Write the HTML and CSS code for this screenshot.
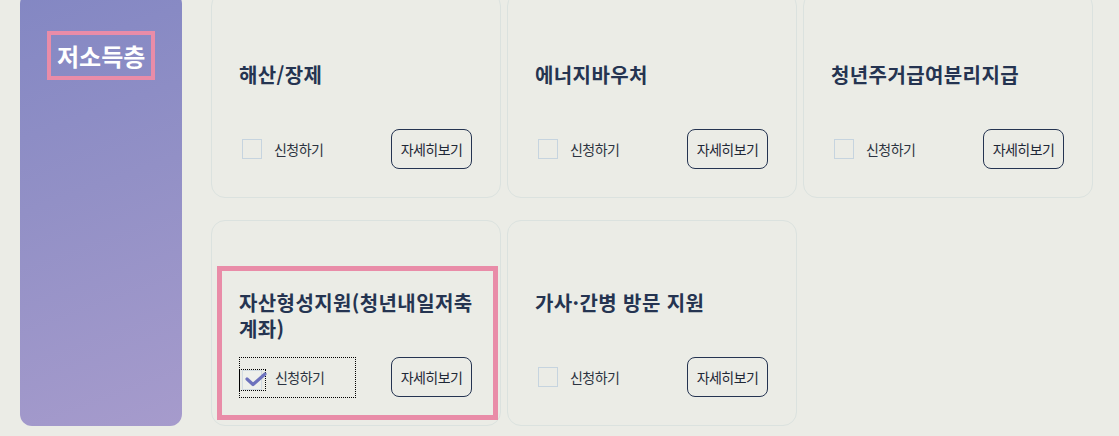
FILE: index.html
```html
<!DOCTYPE html>
<html lang="ko">
<head>
<meta charset="utf-8">
<title>저소득층</title>
<link rel="stylesheet" href="styles.css">
</head>
<body>
<div class="page">
  <aside class="side">
    <h2 class="side-title">저소득층</h2>
  </aside>
  <div class="grid">
    <div class="card">
      <h3 class="card-title">해산/장제</h3>
      <div class="card-foot">
        <label class="apply"><span class="box"></span><span class="apply-text">신청하기</span></label>
        <button class="detail">자세히보기</button>
      </div>
    </div>
    <div class="card">
      <h3 class="card-title">에너지바우처</h3>
      <div class="card-foot">
        <label class="apply"><span class="box"></span><span class="apply-text">신청하기</span></label>
        <button class="detail">자세히보기</button>
      </div>
    </div>
    <div class="card">
      <h3 class="card-title">청년주거급여분리지급</h3>
      <div class="card-foot">
        <label class="apply"><span class="box"></span><span class="apply-text">신청하기</span></label>
        <button class="detail">자세히보기</button>
      </div>
    </div>
    <div class="card">
      <div class="highlight"></div>
      <h3 class="card-title">자산형성지원(청년내일저축계좌)</h3>
      <div class="card-foot">
        <label class="apply apply-focus"><span class="box-focus"><span class="box box-checked"><svg class="check" viewBox="0 0 22 16" width="22" height="16"><path d="M2 7 L8 12.5 L20 2" fill="none" stroke="#6d72bd" stroke-width="3.2" stroke-linecap="round" stroke-linejoin="round"/></svg></span></span><span class="apply-text">신청하기</span></label>
        <button class="detail">자세히보기</button>
      </div>
    </div>
    <div class="card">
      <h3 class="card-title">가사·간병 방문 지원</h3>
      <div class="card-foot">
        <label class="apply"><span class="box"></span><span class="apply-text">신청하기</span></label>
        <button class="detail">자세히보기</button>
      </div>
    </div>
  </div>
</div>
</body>
</html>
```
FILE: styles.css
```css
* { box-sizing: border-box; }
html, body {
  margin: 0;
  padding: 0;
  background: #ebece6;
  height: 436px;
  overflow: hidden;
}
body {
  font-family: "Noto Sans CJK KR", "Noto Sans", sans-serif;
  color: #253451;
}
.page {
  display: flex;
  gap: 29px;
  padding-left: 20px;
  margin-top: -8px;
}
.side {
  width: 162px;
  height: 434px;
  border-radius: 12px;
  background: linear-gradient(160deg, #8387c3 0%, #9290c6 45%, #a69bcc 100%);
  padding: 39px 0 0 27px;
}
.side-title {
  display: inline-block;
  width: 108px;
  margin: 0;
  border: 4px solid #e98ca8;
  padding: 4px 0 4px 6px;
  font-size: 24px;
  line-height: 33px;
  font-weight: 700;
  letter-spacing: 0;
  color: #ffffff;
  white-space: nowrap;
}
.grid {
  display: grid;
  grid-template-columns: repeat(3, 290px);
  grid-auto-rows: 206px;
  column-gap: 6px;
  row-gap: 22px;
}
.card {
  position: relative;
  border: 1px solid #dbe2df;
  border-radius: 14px;
  background: #ebece6;
  padding: 69px 28px 0 27px;
  display: flex;
  flex-direction: column;
}
.card-title {
  margin: 0 -12px 15px 0;
  min-height: 52px;
  font-size: 20px;
  line-height: 26px;
  font-weight: 700;
  letter-spacing: 0.02em;
  color: #253451;
}
.card-foot {
  display: flex;
  align-items: center;
  justify-content: space-between;
  height: 40px;
}
.apply {
  display: flex;
  align-items: center;
  width: 117px;
  height: 41px;
  padding-left: 3px;
  gap: 12px;
  font-size: 14px;
  color: #2b3340;
  letter-spacing: -0.04em;
}
.box {
  width: 20px;
  height: 20px;
  border: 1px solid #c6d4df;
  background: #ebece6;
  flex: none;
}
.apply-focus {
  padding-left: 0;
  gap: 9px;
  outline: 1px dotted #000;
  outline-offset: -1px;
}
.box-focus {
  display: flex;
  align-items: center;
  width: 27px;
  height: 22px;
  padding-left: 2px;
  border: 1px dotted #000;
  margin-top: 6px;
  flex: none;
}
.box-checked {
  position: relative;
  background: #eef0ec;
  border-color: #d2dbe2;
}
.check {
  position: absolute;
  left: 2px;
  top: 1px;
}
.detail {
  width: 81px;
  height: 40px;
  border: 1px solid #253451;
  border-radius: 8px;
  background: transparent;
  font-family: inherit;
  font-size: 14px;
  color: #1f2836;
  letter-spacing: -0.04em;
  padding: 0;
}
.highlight {
  position: absolute;
  left: 5px;
  top: 45px;
  width: 281px;
  height: 154px;
  border: 5px solid #e98ca8;
  pointer-events: none;
}
```
